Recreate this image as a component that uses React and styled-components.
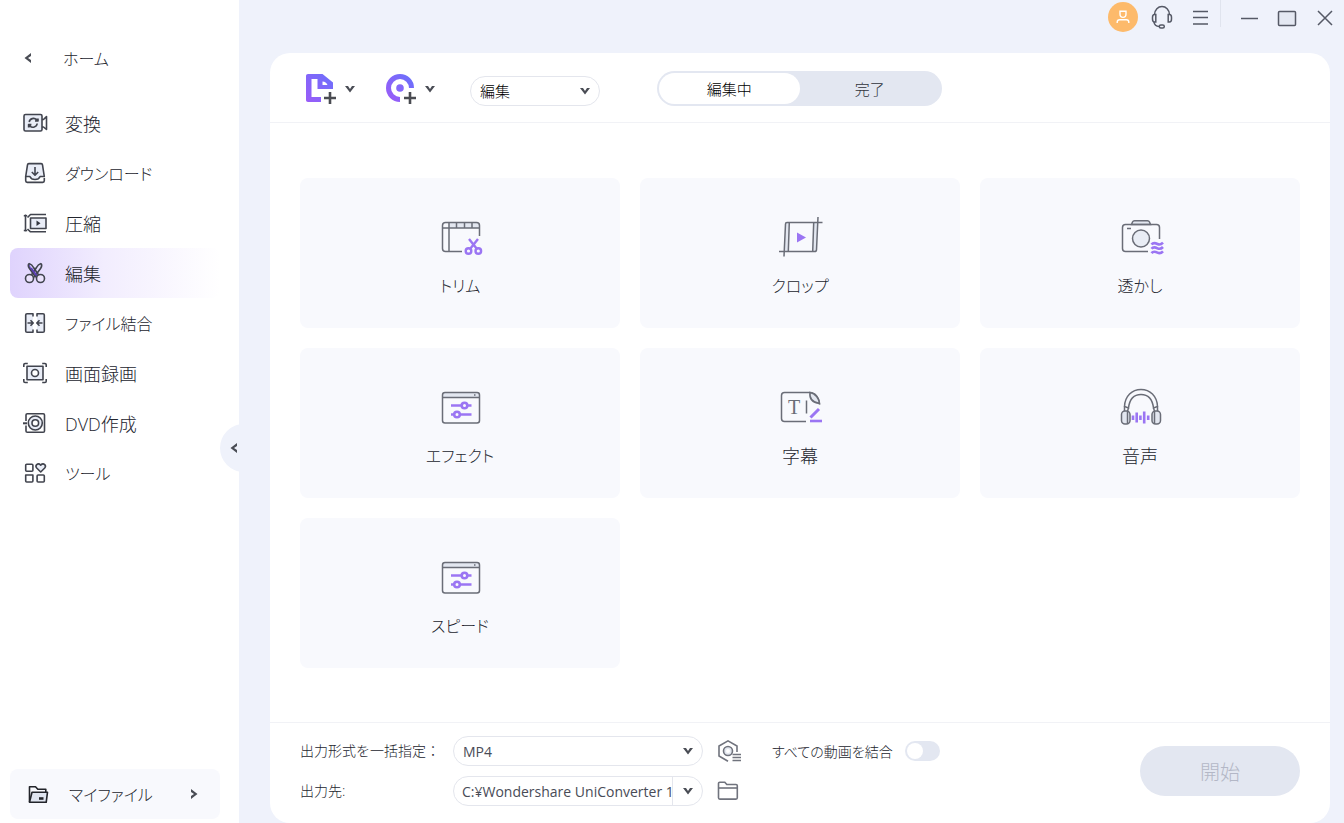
import styled, { createGlobalStyle } from "styled-components";
import { useState } from "react";

const MENU = [
  { id: "convert", label: "変換" },
  { id: "download", label: "ダウンロード", kana: true },
  { id: "compress", label: "圧縮" },
  { id: "edit", label: "編集" },
  { id: "merge", label: "ファイル結合", kana: true },
  { id: "record", label: "画面録画" },
  { id: "dvd", label: "DVD作成" },
  { id: "tools", label: "ツール", kana: true },
];

const FEATURES = [
  { icon: "trim", label: "トリム", kana: true },
  { icon: "crop", label: "クロップ", kana: true },
  { icon: "watermark", label: "透かし", kana: true },
  { icon: "effect", label: "エフェクト", kana: true },
  { icon: "subtitle", label: "字幕" },
  { icon: "audio", label: "音声" },
  { icon: "effect", label: "スピード", kana: true },
];

const menuIcons = {
  convert: (
    <>
      <rect x="2" y="4.5" width="18" height="16.5" rx="1.5" fill="#e9edf7" />
      <path d="M20 9.500h1.500L24.500 6.500v13l-3-2.500H20" />
      <path d="M7.2 12a4.2 4.2 0 0 1 7.4-2l.8-1.2M15.2 13.5a4.2 4.2 0 0 1-7.4 2.2L7 17M13 11h3V8.4M9.4 14.6H6.6v2.8" />
    </>
  ),
  download: (
    <>
      <path
        d="M5.5 4.8C5.6 4 6 3.6 6.8 3.6h12.4c.8 0 1.2.4 1.3 1.2L22.3 16.500h-4.200c-.8 2-2.700 3-5.100 3s-4.300-1-5.100-3H3.700z"
        fill="#e9edf7"
      />
      <path d="M3.700 16.500v4.300c0 1 .6 1.600 1.600 1.600h15.400c1 0 1.600-.6 1.600-1.600V18M13 7v8M9.800 12l3.200 3.200 3.200-3.200" />
    </>
  ),
  compress: (
    <>
      <path d="M3.500 4.500v17M1.800 5.800h3.400M1.800 20.500h3.400M5.500 7.500L8.500 4.500H24M5.500 19L8.500 21.800H24" />
      <rect x="8.500" y="8" width="15.500" height="10.500" fill="#e9edf7" />
      <path d="M14.500 10.500l4 2.800-4 2.800z" fill="#33363f" stroke="none" />
    </>
  ),
  edit: (
    <>
      <path d="M7 3.500c-1 1.500-.8 3.200.3 4.700l6.500 9" fill="#7656d6" />
      <path d="M7 3.500c2.500.8 3.800 2.500 4.500 4L18 17M19 3.500c1 1.500.8 3.200-.3 4.700l-6.500 9" />
      <path d="M19 3.500c-2.500.8-3.800 2.500-4.500 4L8 17" />
      <path d="M9 8l6 8" stroke="#5b3fb4" strokeWidth="2" />
      <circle cx="7.500" cy="18.500" r="4" fill="#eae2fc" />
      <circle cx="18.500" cy="18.500" r="4" fill="#eae2fc" />
    </>
  ),
  merge: (
    <>
      <path
        d="M11 6.500V3.700H5c-.8 0-1.300.5-1.300 1.300v16c0 .8.500 1.300 1.300 1.300h6v-2.800M15 6.500V3.700h6c.8 0 1.300.5 1.300 1.300v16c0 .8-.5 1.300-1.300 1.300h-6v-2.800"
        fill="#e9edf7"
      />
      <path d="M5.500 13h5.500M8.500 10.300l2.700 2.700-2.700 2.700M20.500 13H15M17.500 10.300L14.800 13l2.700 2.700" />
    </>
  ),
  record: (
    <>
      <path d="M1.800 7V4.800c0-.8.500-1.300 1.300-1.300h2.700M20.200 3.500h2.700c.8 0 1.300.5 1.300 1.300V7M24.200 19v2.200c0 .8-.5 1.300-1.300 1.300h-2.700M5.800 22.500H3.100c-.8 0-1.300-.5-1.300-1.300V19" />
      <rect x="5" y="6.200" width="16" height="13.600" fill="#e9edf7" />
      <circle cx="13" cy="13" r="3.500" fill="#fff" />
    </>
  ),
  dvd: (
    <>
      <path d="M4 11V5c0-.8.500-1.300 1.300-1.300h15.900c.8 0 1.300.5 1.300 1.300v16c0 .8-.5 1.300-1.300 1.300H5.300C4.500 22.300 4 21.800 4 21v-5.500" />
      <circle cx="13.300" cy="13" r="7" fill="#e9edf7" />
      <circle cx="13.300" cy="13" r="3.300" fill="#fff" />
      <path d="M1 13.300h4" strokeWidth="2" />
    </>
  ),
  tools: (
    <>
      <rect x="3.700" y="4.200" width="7.200" height="7" rx="1" />
      <rect x="15.100" y="15" width="7.200" height="7" rx="1" />
      <path d="M7.500 15H10.900v6c0 .6-.4 1-1 1H4.700c-.6 0-1-.4-1-1v-6z" />
      <path
        d="M18.700 12l-4-4c-1-1.200-.9-2.500 0-3.400 1.200-1 2.700-.8 4 .5 1.300-1.300 2.800-1.500 4-.5.9.9 1 2.200 0 3.400z"
        fill="#e9edf7"
      />
    </>
  ),
};

const featureIcons = {
  trim: (
    <>
      <path d="M13 8.500h27.500c1.800 0 3 1.200 3 3V14H13z" fill="#e3e7f0" stroke="none" />
      <path d="M43.500 22V11.500c0-1.800-1.200-3-3-3h-31c-1.800 0-3 1.200-3 3v23c0 1.800 1.200 3 3 3H26" />
      <path d="M13 8.500v29M6.500 14h37M20.500 8.500V14M28.500 8.500V14M36 8.500V14" />
      <g stroke="#9b75f3" strokeWidth="2.400">
        <path d="M33 25l8 10M42 25l-8 10" />
        <circle cx="32.500" cy="37" r="2.800" />
        <circle cx="42.300" cy="37" r="2.800" />
      </g>
    </>
  ),
  crop: (
    <>
      <path d="M9.500 8.500h4l-1 29h-4zM37.500 8.500h4l-1 29h-4z" fill="#e3e7f0" stroke="none" />
      <path d="M46.500 8.500H11c-1 0-1.500.5-1.500 1.500L8 42.500M3 37.500h35.500c1.200 0 2-.6 2-1.800L42 3" />
      <path d="M13.300 8.500l-1 29M37.700 8.500l-1 29" />
      <path d="M21 18.500v10l9-5z" fill="#9b75f3" stroke="none" />
    </>
  ),
  watermark: (
    <>
      <path d="M15.500 10.500l1-2.500c.4-.9 1-1.300 2-1.300h13c1 0 1.600.4 2 1.300l1 2.500z" fill="#e3e7f0" />
      <path d="M43.500 25V13.500c0-1.800-1.200-3-3-3h-31c-1.800 0-3 1.200-3 3v21c0 1.800 1.200 3 3 3H32M11 14.500h4" />
      <circle cx="25" cy="24.500" r="8.500" fill="#e9edf5" />
      <path
        d="M35.500 30.500c2-2.500 4-1.500 6-.5s3.500.8 5.500-1.300M35.500 34.800c2-2.500 4-1.500 6-.5s3.500.8 5.500-1.300M35.500 39.100c2-2.500 4-1.500 6-.5s3.500.8 5.500-1.300"
        stroke="#9b75f3"
        strokeWidth="2.600"
      />
    </>
  ),
  effect: (
    <>
      <path d="M6.500 13.500v-3c0-1.300.9-2.200 2.200-2.200h32.600c1.300 0 2.200.9 2.200 2.200v3z" fill="#e3e7f0" stroke="none" />
      <rect x="6.500" y="8.500" width="37" height="30.500" rx="2.500" />
      <path d="M6.500 13.500h37M38 11h1.500" />
      <g stroke="#9b75f3" strokeWidth="2.600">
        <path d="M15 21.500h10.500M31.500 21.500h4M15 30.500h3M24 30.500h11.500" />
        <circle cx="28.500" cy="21.500" r="2.800" />
        <circle cx="21" cy="30.500" r="2.800" />
      </g>
    </>
  ),
  subtitle: (
    <>
      <path d="M30 37.500H8.500c-1.800 0-3-1.200-3-3v-23c0-1.800 1.200-3 3-3H34c5 0 9.500 5 9.500 12" />
      <path d="M34 8.500c-.8 6 2.500 10 9.500 11-.5-5-4-10-9.500-11z" fill="#e3e7f0" />
      <text x="12" y="30" fontFamily="Liberation Serif, serif" fontSize="20" fill="#6a6d77" stroke="none">
        T
      </text>
      <path d="M30.500 16.500v13" />
      <path d="M34.500 33.500l8.500-8.500" stroke="#9b75f3" strokeWidth="3" />
      <path d="M34 37h12" stroke="#9b75f3" strokeWidth="2.600" />
    </>
  ),
  audio: (
    <>
      <path d="M8.500 22.500C9 12 16 5.500 25 5.500S41 12 41.500 22.500l-4 1.500C36.500 15.500 32 10.500 25 10.500S13.500 15.500 12.500 24z" fill="#f8f9fd" />
      <rect x="5.500" y="27" width="8.500" height="13" rx="3.500" fill="#e3e7f0" />
      <rect x="36" y="27" width="8.500" height="13" rx="3.500" fill="#e3e7f0" />
      <path d="M8.500 22.500V27M41.500 22.500V27M12.500 24l-1 3v13M37.500 24l1 3v13" />
      <path
        d="M17 31.500v4.500M20.700 28.500v10M24.400 31.500v4.500M28.200 27.500v12M32.200 31.500v4.500"
        stroke="#9b75f3"
        strokeWidth="2.600"
      />
    </>
  ),
};

function Chevron({ dir = "down" }) {
  const paths = {
    down: "M1 3h3l2 3 2-3h3L6 9.500z",
    left: "M9 1v3L6 6l3 2v3L2.500 6z",
    right: "M3 1v3l3 2-3 2v3l6.500-5z",
  };

  return (
    <ChevronSvg viewBox="0 0 12 12" aria-hidden="true">
      <path d={paths[dir]} />
    </ChevronSvg>
  );
}

export default function App() {
  const [page, setPage] = useState("edit");
  const [tab, setTab] = useState("editing");
  const [format, setFormat] = useState("MP4");
  const [merge, setMerge] = useState(false);
  const [path, setPath] = useState("C:¥Wondershare UniConverter 1");

  return (
    <Window>
      <GlobalStyle />

      <Sidebar>
        <HomeButton>
          <Chevron dir="left" />
          ホーム
        </HomeButton>

        <nav>
          {MENU.map((item) => (
            <MenuItem
              key={item.id}
              $active={page === item.id}
              $kana={item.kana}
              onClick={() => setPage(item.id)}
            >
              <MenuSvg viewBox="0 0 26 26" aria-hidden="true">
                {menuIcons[item.id]}
              </MenuSvg>
              {item.label}
            </MenuItem>
          ))}
        </nav>

        <MyFiles>
          <FileSvg viewBox="0 0 24 24" aria-hidden="true">
            <path d="M3.500 20V4.700h6l2.300 2.500h8V10" />
            <path d="M3.500 20.300L6 10.200h15.500l-1.300 10.100z" fill="#dfe4ef" />
            <path d="M13 16.500h4.500" strokeWidth="2.600" />
          </FileSvg>
          <span>マイファイル</span>
          <Chevron dir="right" />
        </MyFiles>

        <CollapseButton aria-label="サイドバーを閉じる">
          <Chevron dir="left" />
        </CollapseButton>
      </Sidebar>

      <Main>
        <TitleBar>
          <Avatar aria-label="アカウント">
            <svg width="18" height="18" viewBox="0 0 18 18">
              <path d="M6 3.200h6V6c0 2-1.300 3.400-3 3.400S6 8 6 6zM3.200 15v-.8c0-1.500 1-2.400 2.400-2.400h6.800c1.400 0 2.400.9 2.400 2.400v.8" />
            </svg>
          </Avatar>
          <TitleButton aria-label="サポート">
            <svg width="24" height="24" viewBox="0 0 24 24">
              <path d="M4.500 9.500C4.800 4.800 8 1.500 12 1.500s7.200 3.300 7.500 8" />
              <path d="M5.800 9.500H4.500c-1.200 0-2 1-2 3V14c0 2 .8 3 2 3h1.300zM18.200 9.500h1.300c1.200 0 2 1 2 3V14c0 2-.8 3-2 3h-1.300z" />
              <path d="M4 17c.3 2.800 2 4.300 5.300 4.500" />
              <rect x="9.300" y="20" width="5" height="3" rx="1.500" />
            </svg>
          </TitleButton>
          <TitleButton aria-label="メニュー">
            <svg width="24" height="24" viewBox="0 0 24 24">
              <path d="M5 6.500h15M5 12.500h15M5 19h15" />
            </svg>
          </TitleButton>
          <TitleDivider />
          <TitleButton aria-label="最小化">
            <svg width="24" height="24" viewBox="0 0 24 24">
              <path d="M4 13.500h17" />
            </svg>
          </TitleButton>
          <TitleButton aria-label="最大化">
            <svg width="24" height="24" viewBox="0 0 24 24">
              <rect x="3.500" y="6.500" width="17" height="14" rx="1" fill="#e4e8f2" />
            </svg>
          </TitleButton>
          <TitleButton aria-label="閉じる">
            <svg width="24" height="24" viewBox="0 0 24 24">
              <path d="M5 6l14 14M19 6L5 20" />
            </svg>
          </TitleButton>
        </TitleBar>

        <Panel>
          <Toolbar>
            <AddButton aria-label="ファイルを追加">
              <svg width="32" height="32" viewBox="0 0 32 32" fill="none">
                <defs>
                  <linearGradient id="violet" x1="0" y1="1" x2="1" y2="0">
                    <stop offset="0" stopColor="#9a5cf8" />
                    <stop offset="1" stopColor="#6b70fb" />
                  </linearGradient>
                </defs>
                <path
                  d="M3 1h14.500L28 9.500V16H12.500V6H6.500v18H16v5H3c-1.200 0-2-.8-2-2V3c0-1.200.8-2 2-2zM17.500 8.500V12h5c-1-2-2.500-3.500-5-3.500z"
                  fill="url(#violet)"
                  fillRule="evenodd"
                />
                <path d="M25 19v12M19 25h12" stroke="#4a4c52" strokeWidth="2.600" />
              </svg>
              <Chevron />
            </AddButton>
            <AddButton aria-label="ディスクを追加">
              <svg width="32" height="32" viewBox="0 0 32 32" fill="none">
                <path d="M15 26.500A11.500 11.500 0 1 1 26.500 15" stroke="url(#violet)" strokeWidth="5" />
                <circle cx="15" cy="15" r="3.800" fill="#8468fa" />
                <path d="M25 19v12M19 25h12" stroke="#4a4c52" strokeWidth="2.600" />
              </svg>
              <Chevron />
            </AddButton>

            <ModeField>
              <Select aria-label="モード" $size={15} $light defaultValue="編集">
                <option>編集</option>
                <option>変換</option>
              </Select>
              <Chevron />
            </ModeField>

            <Tabs role="tablist">
              <Tab role="tab" aria-selected={tab === "editing"} $active={tab === "editing"} onClick={() => setTab("editing")}>
                編集中
              </Tab>
              <Tab role="tab" aria-selected={tab === "done"} $active={tab === "done"} onClick={() => setTab("done")}>
                完了
              </Tab>
            </Tabs>
          </Toolbar>

          <CardGrid>
            {FEATURES.map((feature) => (
              <Card key={feature.label} $kana={feature.kana}>
                <CardSvg viewBox="0 0 48 48" aria-hidden="true">
                  {featureIcons[feature.icon]}
                </CardSvg>
                {feature.label}
              </Card>
            ))}
          </CardGrid>

          <Footer>
            <Settings>
              <SettingRow>
                <FieldLabel htmlFor="format">出力形式を一括指定：</FieldLabel>
                <Field>
                  <Select id="format" $size={14} value={format} onChange={(e) => setFormat(e.target.value)}>
                    <option>MP4</option>
                    <option>MOV</option>
                    <option>AVI</option>
                  </Select>
                  <Chevron />
                </Field>
                <ToolButton aria-label="出力設定">
                  <svg width="24" height="24" viewBox="0 0 24 24">
                    <path d="M11 22.200l-9-5.200V7L11 1.800 20 7v6" />
                    <circle cx="11" cy="12" r="4.500" fill="#e4e8f0" />
                    <circle cx="11" cy="12" r="2" fill="#fff" stroke="none" />
                    <path d="M15.500 15.500H24M15.500 18.500H24M15.500 21.500H24" />
                  </svg>
                </ToolButton>
                <MergeLabel>
                  すべての動画を結合
                  <Switch type="checkbox" role="switch" checked={merge} onChange={(e) => setMerge(e.target.checked)} />
                </MergeLabel>
              </SettingRow>

              <SettingRow>
                <FieldLabel htmlFor="path">出力先:</FieldLabel>
                <PathField>
                  <PathInput id="path" type="text" value={path} onChange={(e) => setPath(e.target.value)} />
                  <PathButton aria-label="出力先の履歴">
                    <Chevron />
                  </PathButton>
                </PathField>
                <ToolButton aria-label="フォルダを開く">
                  <svg width="24" height="24" viewBox="0 0 24 24">
                    <path d="M1.500 7V4.500c0-.8.500-1.300 1.300-1.300h5l2 2.300h9.200c.8 0 1.300.5 1.300 1.300v12c0 .8-.5 1.300-1.300 1.300H2.800c-.8 0-1.300-.5-1.300-1.300z" />
                    <path d="M1.500 9h18.800" />
                  </svg>
                </ToolButton>
              </SettingRow>
            </Settings>

            <StartButton disabled>開始</StartButton>
          </Footer>
        </Panel>
      </Main>
    </Window>
  );
}

const GlobalStyle = createGlobalStyle`
  * {
    box-sizing: border-box;
  }
  body {
    margin: 0;
    background-color: #eff2fb;
  }
  body, button, input, select {
    font-family: "Open Sans", "Noto Sans CJK JP", sans-serif;
    font-weight: 300;
    font-feature-settings: "palt";
    color: #23252e;
  }
  button {
    display: flex;
    align-items: center;
    border: none;
    padding: 0;
    background: none;
    cursor: pointer;
  }
`;

const Window = styled.div`
  display: grid;
  grid-template-columns: 239px 1fr;
  min-height: 100vh;
`;

const ChevronSvg = styled.svg`
  width: 12px;
  height: 12px;
  flex-shrink: 0;
  fill: #4a4d55;
`;

const Sidebar = styled.aside`
  position: relative;
  display: flex;
  flex-direction: column;
  padding: 34px 19px 4px 10px;
  background-color: white;
  overflow: hidden;
`;

const HomeButton = styled.button`
  gap: 29px;
  height: 48px;
  margin-bottom: 16px;
  padding-left: 12px;
  font-size: 16px;
`;

const MenuItem = styled.button`
  width: 100%;
  height: 50px;
  gap: 17px;
  padding-left: 12px;
  border-radius: 8px;
  font-size: ${(props) => (props.$kana ? "16px" : "18px")};
  background: ${(props) => (props.$active ? "linear-gradient(90deg, #dfd3fd, #f2edfe 45%, #ffffff)" : "none")};
`;

const MenuSvg = styled.svg`
  width: 26px;
  height: 26px;
  fill: none;
  stroke: #41444e;
  stroke-width: 1.6;
  stroke-linejoin: round;
`;

const MyFiles = styled.button`
  height: 50px;
  margin-top: auto;
  padding: 0 20px 0 16px;
  border-radius: 8px;
  background-color: #f8f9fd;
  font-size: 16px;

  span {
    flex: 1;
    margin-left: 19px;
    text-align: left;
  }
`;

const FileSvg = styled.svg`
  width: 24px;
  height: 24px;
  fill: none;
  stroke: #22242a;
  stroke-width: 1.6;
  stroke-linejoin: round;
`;

const CollapseButton = styled.button`
  position: absolute;
  top: 424px;
  right: -29px;
  width: 48px;
  height: 48px;
  padding-left: 8px;
  border-radius: 50%;
  background-color: #eff2fb;
`;

const Main = styled.main`
  display: flex;
  flex-direction: column;
  min-width: 0;
`;

const TitleBar = styled.header`
  display: flex;
  justify-content: flex-end;
  height: 34px;
  margin-bottom: 19px;
`;

const Avatar = styled.button`
  justify-content: center;
  width: 30px;
  height: 30px;
  margin: 2px 5px 0 0;
  border-radius: 50%;
  background-color: #fdba6b;

  svg {
    fill: none;
    stroke: white;
    stroke-width: 1.4;
  }
`;

const TitleButton = styled.button`
  justify-content: center;
  width: 38px;
  height: 34px;

  svg {
    fill: none;
    stroke: #555966;
    stroke-width: 1.5;
  }
`;

const TitleDivider = styled.div`
  width: 1px;
  height: 27px;
  margin: 0 9px 0 1px;
  background-color: #e0e4ee;
`;

const Panel = styled.section`
  flex: 1;
  display: flex;
  flex-direction: column;
  margin: 0 14px 0 31px;
  border-radius: 20px;
  background-color: white;
`;

const Toolbar = styled.div`
  display: flex;
  align-items: center;
  padding: 18px 35px 16px;
  border-bottom: 1px solid #f1f2f6;
`;

const AddButton = styled.button`
  gap: 7px;
  width: 80px;
`;

const Field = styled.div`
  display: grid;
  align-items: center;
  width: 250px;
  height: 30px;

  > * {
    grid-area: 1 / 1;
  }
  svg {
    justify-self: end;
    margin-right: 9px;
    pointer-events: none;
  }
`;

const ModeField = styled(Field)`
  align-self: flex-end;
  width: 130px;
  margin: 0 57px 0 5px;
`;

const Select = styled.select`
  appearance: none;
  width: 100%;
  height: 30px;
  padding: 0 9px;
  border: 1px solid #e4e6ed;
  border-radius: 15px;
  background-color: white;
  font-size: ${(props) => props.$size}px;
  font-weight: ${(props) => (props.$light ? 300 : 400)};
  color: ${(props) => (props.$light ? "#000000" : "#484b56")};
`;

const Tabs = styled.div`
  display: flex;
  width: 285px;
  height: 35px;
  padding: 2px;
  border-radius: 18px;
  background-color: #e3e7f1;
`;

const Tab = styled.button`
  flex: 1;
  justify-content: center;
  border-radius: 16px;
  background-color: ${(props) => (props.$active ? "white" : "transparent")};
  font-size: 15px;
  color: ${(props) => (props.$active ? "#000000" : "#30333c")};
`;

const CardGrid = styled.div`
  flex: 1;
  display: grid;
  grid-template-columns: repeat(3, 1fr);
  align-content: start;
  gap: 20px;
  padding: 55px 30px 30px;
`;

const Card = styled.button`
  flex-direction: column;
  gap: 12px;
  padding: 36px 0 30px;
  border-radius: 8px;
  background-color: #f8f9fd;
  font-size: ${(props) => (props.$kana ? "16px" : "18px")};
  line-height: 24px;
`;

const CardSvg = styled.svg`
  width: 48px;
  height: 48px;
  fill: none;
  stroke: #6a6d77;
  stroke-width: 1.5;
`;

const Footer = styled.footer`
  display: flex;
  align-items: center;
  justify-content: space-between;
  padding: 13px 30px 17px;
  border-top: 1px solid #f1f2f6;
`;

const Settings = styled.div`
  display: flex;
  flex-direction: column;
  gap: 10px;
`;

const SettingRow = styled.div`
  display: flex;
  align-items: center;
  height: 30px;
`;

const FieldLabel = styled.label`
  width: 153px;
  font-size: 14px;
  font-feature-settings: normal;
  line-height: 20px;
  white-space: nowrap;
`;

const ToolButton = styled.button`
  margin-left: 14px;

  svg {
    fill: none;
    stroke: #70737d;
    stroke-width: 1.6;
  }
`;

const MergeLabel = styled.label`
  display: flex;
  align-items: center;
  gap: 12px;
  margin-left: 31px;
  font-size: 14px;
`;

const Switch = styled.input`
  appearance: none;
  width: 35px;
  height: 20px;
  margin: 0;
  padding: 2px;
  border-radius: 10px;
  background-color: ${(props) => (props.checked ? "#8468fa" : "#e3e7f1")};

  &::before {
    content: "";
    display: block;
    width: 16px;
    height: 16px;
    margin-left: ${(props) => (props.checked ? "15px" : "0")};
    border-radius: 50%;
    background-color: white;
  }
`;

const PathField = styled.div`
  display: flex;
  width: 250px;
  height: 30px;
  border: 1px solid #e4e6ed;
  border-radius: 15px;
  overflow: hidden;
`;

const PathInput = styled.input`
  flex: 1;
  min-width: 0;
  padding: 0 0 0 8px;
  border: none;
  background: none;
  font-size: 14px;
  font-weight: 400;
  color: #484b56;
`;

const PathButton = styled.button`
  justify-content: center;
  width: 30px;
  border-left: 1px solid #e4e6ed;
`;

const StartButton = styled.button`
  justify-content: center;
  width: 160px;
  height: 50px;
  border-radius: 25px;
  background-color: #e3e7f1;
  font-size: 20px;
  color: #b3b7c6;
`;
